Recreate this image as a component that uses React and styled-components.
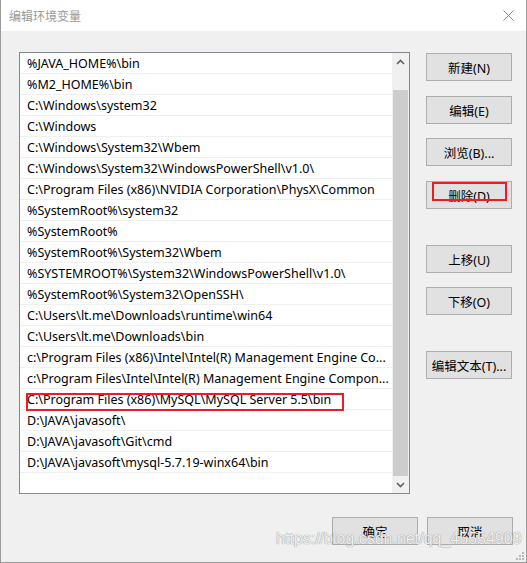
import React from "react";
import styled, { createGlobalStyle } from "styled-components";

const GlobalStyle = createGlobalStyle`
  html, body {
    margin: 0;
    padding: 0;
    background: #ffffff;
  }
  * {
    box-sizing: border-box;
  }
`;

const paths = [
  "%JAVA_HOME%\\bin",
  "%M2_HOME%\\bin",
  "C:\\Windows\\system32",
  "C:\\Windows",
  "C:\\Windows\\System32\\Wbem",
  "C:\\Windows\\System32\\WindowsPowerShell\\v1.0\\",
  "C:\\Program Files (x86)\\NVIDIA Corporation\\PhysX\\Common",
  "%SystemRoot%\\system32",
  "%SystemRoot%",
  "%SystemRoot%\\System32\\Wbem",
  "%SYSTEMROOT%\\System32\\WindowsPowerShell\\v1.0\\",
  "%SystemRoot%\\System32\\OpenSSH\\",
  "C:\\Users\\lt.me\\Downloads\\runtime\\win64",
  "C:\\Users\\lt.me\\Downloads\\bin",
  "c:\\Program Files (x86)\\Intel\\Intel(R) Management Engine Co...",
  "c:\\Program Files\\Intel\\Intel(R) Management Engine Compon...",
  "C:\\Program Files (x86)\\MySQL\\MySQL Server 5.5\\bin",
  "D:\\JAVA\\javasoft\\",
  "D:\\JAVA\\javasoft\\Git\\cmd",
  "D:\\JAVA\\javasoft\\mysql-5.7.19-winx64\\bin",
];

const sideButtons = [
  { label: "新建(N)", gap: 0 },
  { label: "编辑(E)", gap: 15 },
  { label: "浏览(B)...", gap: 14 },
  { label: "删除(D)", gap: 15, marked: true },
  { label: "上移(U)", gap: 36 },
  { label: "下移(O)", gap: 14 },
  { label: "编辑文本(T)...", gap: 36 },
];

const Window = styled.div`
  position: relative;
  width: 527px;
  height: 563px;
  display: flex;
  flex-direction: column;
  background: #f0f0f0;
  border: 1px solid #9b9b9b;
  border-top: none;
  font-family: "Noto Sans", "Noto Sans CJK SC", sans-serif;
  font-size: 12px;
  color: #000;
  overflow: hidden;
`;

const TitleBar = styled.div`
  height: 31px;
  flex: none;
  background: #ffffff;
  display: flex;
  align-items: center;
  justify-content: space-between;
  padding: 0 12px 0 8px;
`;

const Title = styled.span`
  font-family: "Noto Sans CJK SC", sans-serif;
  font-size: 12px;
  color: #999999;
`;

const Body = styled.div`
  flex: 1;
  display: flex;
  flex-direction: column;
  padding: 21px 0 0 18px;
`;

const TopRow = styled.div`
  display: flex;
  align-items: flex-start;
  gap: 16px;
`;

const ListBox = styled.div`
  width: 391px;
  height: 442px;
  border: 1px solid #828790;
  background: #ffffff;
  display: flex;
`;

const Rows = styled.div`
  flex: 1;
  display: flex;
  flex-direction: column;
`;

const Row = styled.div`
  position: relative;
  height: 21px;
  flex: none;
  border-bottom: 1px solid #f0f0f0;
  padding-left: 7px;
  padding-top: 1px;
  display: flex;
  align-items: center;
  white-space: nowrap;
  font-size: 12.5px;
`;

const Mark = styled.div`
  position: absolute;
  left: ${(p) => p.$left}px;
  top: ${(p) => p.$top}px;
  width: ${(p) => p.$width}px;
  height: ${(p) => p.$height}px;
  border: 2px solid #ed1c24;
  pointer-events: none;
`;

const ScrollBar = styled.div`
  width: 17px;
  flex: none;
  background: #f0f0f0;
  display: flex;
  flex-direction: column;
  align-items: center;
`;

const Arrow = styled.div`
  width: 17px;
  height: 17px;
  flex: none;
  display: flex;
  align-items: center;
  justify-content: center;
`;

const Track = styled.div`
  flex: 1;
  width: 15px;
  padding-top: 20px;
  display: flex;
`;

const Thumb = styled.div`
  flex: 1;
  background: #cdcdcd;
`;

const ButtonColumn = styled.div`
  width: 86px;
  display: flex;
  flex-direction: column;
  padding-top: 1px;
`;

const Button = styled.div`
  position: relative;
  width: 86px;
  height: 28px;
  flex: none;
  margin-top: ${(p) => p.$gap || 0}px;
  background: #e1e1e1;
  border: 1px solid #adadad;
  display: flex;
  align-items: center;
  justify-content: center;
  font-size: 12.5px;
  white-space: nowrap;
`;

const BottomRow = styled.div`
  display: flex;
  justify-content: flex-end;
  gap: 9px;
  padding-right: 13px;
  margin-top: 23px;
`;

const Watermark = styled.div`
  position: absolute;
  left: 275px;
  top: 530px;
  font-family: "Liberation Sans", Arial, sans-serif;
  font-size: 16px;
  color: rgba(255, 255, 255, 0.85);
  text-shadow: 0 0 1px #9a9a9a, 0 0 1px #9a9a9a;
  white-space: nowrap;
  pointer-events: none;
`;

const Grip = styled.svg`
  position: absolute;
  right: 2px;
  bottom: 2px;
`;

const Chevron = ({ up }) => (
  <svg width="9" height="6" viewBox="0 0 9 6">
    <polyline
      points={up ? "1,5 4.5,1.5 8,5" : "1,1 4.5,4.5 8,1"}
      fill="none"
      stroke="#606060"
      strokeWidth="1.6"
    />
  </svg>
);

const App = () => {
  return (
    <>
      <GlobalStyle />
      <Window>
        <TitleBar>
          <Title>编辑环境变量</Title>
          <svg width="11" height="11" viewBox="0 0 11 11">
            <path d="M0.5 0.5 L10.5 10.5 M10.5 0.5 L0.5 10.5" stroke="#8a8a8a" strokeWidth="1" />
          </svg>
        </TitleBar>
        <Body>
          <TopRow>
            <ListBox>
              <Rows>
                {paths.map((p, i) => (
                  <Row key={i}>
                    {p}
                    {i === 16 && <Mark $left={6} $top={4} $width={318} $height={18} />}
                  </Row>
                ))}
              </Rows>
              <ScrollBar>
                <Arrow>
                  <Chevron up />
                </Arrow>
                <Track>
                  <Thumb />
                </Track>
                <Arrow>
                  <Chevron />
                </Arrow>
              </ScrollBar>
            </ListBox>
            <ButtonColumn>
              {sideButtons.map((b) => (
                <Button key={b.label} $gap={b.gap}>
                  {b.label}
                  {b.marked && <Mark $left={5} $top={0} $width={75} $height={19} />}
                </Button>
              ))}
            </ButtonColumn>
          </TopRow>
          <BottomRow>
            <Button>确定</Button>
            <Button>取消</Button>
          </BottomRow>
        </Body>
        <Watermark>https://blog.csdn.net/qq_45554909</Watermark>
        <Grip width="9" height="9" viewBox="0 0 9 9">
          {[
            [7, 1],
            [4, 4],
            [7, 4],
            [1, 7],
            [4, 7],
            [7, 7],
          ].map(([x, y]) => (
            <rect key={`${x}-${y}`} x={x} y={y} width="2" height="2" fill="#b8b8b8" />
          ))}
        </Grip>
      </Window>
    </>
  );
};

export default App;
